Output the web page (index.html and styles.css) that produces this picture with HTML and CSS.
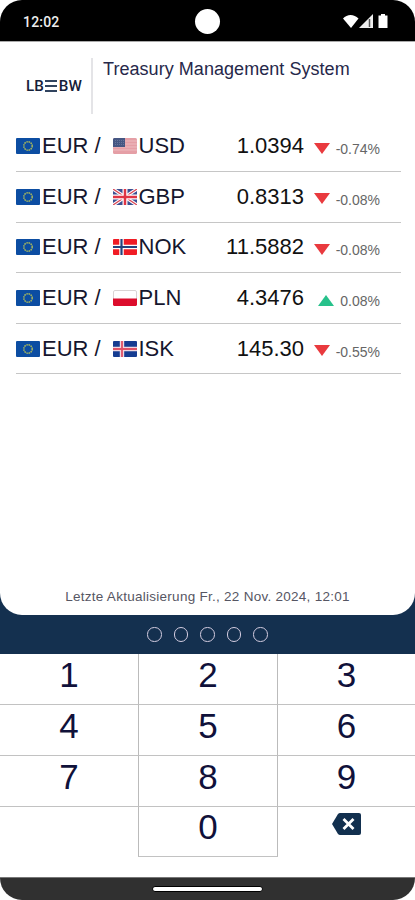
FILE: index.html
```html
<!DOCTYPE html>
<html lang="de">
<head>
<meta charset="utf-8">
<title>Treasury Management System</title>
<link rel="stylesheet" href="styles.css">
</head>
<body>
<svg class="defs" width="0" height="0" aria-hidden="true">
  <symbol id="eu" viewBox="0 0 24 16"><rect width="24" height="16" rx="1" fill="#0c4da2"/><circle cx="12" cy="8" r="4.2" fill="none" stroke="#a9b85c" stroke-width="1.5" stroke-dasharray="1.5 .7"/></symbol>
  <symbol id="us" viewBox="0 0 24 16"><rect width="24" height="16" rx="1.5" fill="#e59fa6"/><path d="M0 3h24M0 6h24M0 9h24M0 12h24" stroke="#edbcc0"/><path d="M1 0h11v9H0V1z" fill="#465783"/><path d="M2 2.5h9M2 4.5h9M2 6.5h9" stroke="#7583a5" stroke-width=".7" stroke-dasharray="1 1"/></symbol>
  <symbol id="gb" viewBox="0 0 24 16"><rect width="24" height="16" rx="1.5" fill="#3c4f91"/><path d="M0 0l24 16M24 0L0 16" stroke="#fff" stroke-width="3.4"/><path d="M0 0l24 16M24 0L0 16" stroke="#dc4856" stroke-width="1.3"/><path d="M12 0v16M0 8h24" stroke="#fff" stroke-width="5"/><path d="M12 0v16M0 8h24" stroke="#df3444" stroke-width="2.5"/></symbol>
  <symbol id="no" viewBox="0 0 24 16"><rect width="24" height="16" rx="1" fill="#f01c25"/><path d="M8.5 0v16M0 8h24" stroke="#fff" stroke-width="4.5"/><path d="M8.5 0v16M0 8h24" stroke="#24427d" stroke-width="2.2"/></symbol>
  <symbol id="pl" viewBox="0 0 24 16"><rect x=".5" y=".5" width="23" height="15" rx="1.5" fill="#fff" stroke="#d9d4d4"/><path d="M0 8.5h24V15l-1 1H1l-1-1z" fill="#dc0d2c"/></symbol>
  <symbol id="is" viewBox="0 0 24 16"><rect width="24" height="16" rx="1" fill="#153c91"/><path d="M9 0v16M0 8h24" stroke="#f0d7e0" stroke-width="4.4"/><path d="M9 0v16M0 8h24" stroke="#df5267" stroke-width="1.8"/></symbol>
</svg>
<div class="phone">
  <header class="status">
    <span class="time">12:02</span>
    <span class="camera"></span>
    <svg class="signals" width="46" height="15" viewBox="0 0 46 15">
      <path d="M0 4.500C4-.2 11-.2 15.500 4.500L8 14z" fill="#fff"/>
      <path d="M30 0v14H16z" fill="#eee"/><path d="M26.500 5v8" stroke="#555" stroke-width="1.500"/>
      <path d="M38 1.500V0h4v1.500h2.500V14h-9V1.500z" fill="#fff"/>
    </svg>
  </header>
  <main class="rates">
    <div class="brand">
      <div class="logo"><span>LB</span><i class="bars"></i><span>BW</span></div>
      <h1>Treasury Management System</h1>
    </div>
    <div class="list">
      <div class="row"><svg class="flag"><use href="#eu"/></svg><span class="base">EUR /</span><svg class="flag"><use href="#us"/></svg><span class="quote">USD</span><span class="value">1.0394</span><span class="change"><i class="down"></i>-0.74%</span></div>
      <div class="row"><svg class="flag"><use href="#eu"/></svg><span class="base">EUR /</span><svg class="flag"><use href="#gb"/></svg><span class="quote">GBP</span><span class="value">0.8313</span><span class="change"><i class="down"></i>-0.08%</span></div>
      <div class="row"><svg class="flag"><use href="#eu"/></svg><span class="base">EUR /</span><svg class="flag"><use href="#no"/></svg><span class="quote">NOK</span><span class="value">11.5882</span><span class="change"><i class="down"></i>-0.08%</span></div>
      <div class="row"><svg class="flag"><use href="#eu"/></svg><span class="base">EUR /</span><svg class="flag"><use href="#pl"/></svg><span class="quote">PLN</span><span class="value">4.3476</span><span class="change"><i class="up"></i>0.08%</span></div>
      <div class="row"><svg class="flag"><use href="#eu"/></svg><span class="base">EUR /</span><svg class="flag"><use href="#is"/></svg><span class="quote">ISK</span><span class="value">145.30</span><span class="change"><i class="down"></i>-0.55%</span></div>
    </div>
    <p class="updated">Letzte Aktualisierung Fr., 22 Nov. 2024, 12:01</p>
  </main>
  <div class="pin"><i></i><i></i><i></i><i></i><i></i></div>
  <div class="keypad">
    <span>1</span><span class="mid">2</span><span>3</span>
    <span>4</span><span class="mid">5</span><span>6</span>
    <span>7</span><span class="mid">8</span><span>9</span>
    <span class="last"></span><span class="mid zero">0</span><span class="last"><svg class="erase" width="29" height="22" viewBox="0 0 29 22"><path d="M8 0h19q2 0 2 2v18q0 2-2 2H8q-1 0-2-1L0 11 6 1q1-1 2-1z" fill="#12304f"/><path d="M11.500 6l10 10M21.500 6l-10 10" stroke="#fff" stroke-width="2.800"/></svg></span>
  </div>
  <footer class="navbar"><i></i></footer>
</div>
</body>
</html>
```
FILE: styles.css
```css
* { box-sizing: border-box; }
body { margin: 0; background: #fff; font-family: "Liberation Sans", Arial, sans-serif; }
.defs { display: block; position: absolute; }
.phone { width: 415px; height: 900px; display: flex; flex-direction: column; overflow: hidden; border-radius: 22px; background: #fff; }
.status { height: 41px; flex: none; background: #000; color: #eee; display: grid; grid-template-columns: 1fr 25px 1fr; align-items: center; padding: 2px 26px 0 23px; }
.time { font: 500 14px Roboto, sans-serif; letter-spacing: .2px; }
.camera { width: 25px; height: 25px; border-radius: 50%; background: #fff; margin-left: 1px; }
.signals { justify-self: end; }
.rates { position: relative; height: 574px; flex: none; display: flex; flex-direction: column; background: #fff; border-top: 1px solid #aaa; border-radius: 0 0 22px 22px; }
.brand { height: 79.5px; flex: none; display: flex; padding: 16px 0 0 26px; }
.logo { width: 67px; height: 56px; border-right: 2px solid #e4e4e7; display: flex; align-items: center; font: 500 15.2px Roboto, sans-serif; color: #152039; }
.bars { width: 12px; height: 12px; margin: 0 2px 0 1px; border-top: 2px solid #31445f; border-bottom: 2px solid #31445f; display: flex; align-items: center; }
.bars::before { content: ""; width: 100%; height: 2px; background: #31445f; }
h1 { margin: 0 0 0 10px; font-size: 18px; line-height: 22px; font-weight: 400; letter-spacing: .05px; color: #26284a; white-space: nowrap; }
.list { padding: 0 14px 0 16px; }
.row { height: 50.6px; border-bottom: 1.5px solid #c6c6c6; display: flex; align-items: center; font-size: 22px; color: #15162e; white-space: nowrap; }
.flag { width: 24px; height: 16px; flex: none; }
.base { width: 70px; padding-left: 2px; margin-right: 2.5px; }
.quote { padding-left: 2px; }
.value { width: 90px; margin-left: auto; text-align: right; color: #111; }
.change { width: 76px; margin-right: 21px; display: flex; align-items: center; justify-content: flex-end; gap: 5px; font-size: 14px; color: #666; padding-top: 6px; }
.down, .up { border: 8.500px solid transparent; border-bottom: 0; border-top: 11px solid #e93a3e; margin-top: -2px; margin-right: 1px; }
.up { border: 8.500px solid transparent; border-top: 0; border-bottom: 11px solid #27c18b; }
.updated { margin: auto 0 10px; text-align: center; font-size: 13.5px; line-height: 17px; letter-spacing: .27px; color: #565663; }
.pin { height: 61px; flex: none; margin-top: -22px; padding-top: 22px; background: #14304f; display: flex; align-items: center; justify-content: center; gap: 12px; }
.pin i { width: 14.5px; height: 14.5px; border: 1.8px solid #d3cce0; border-radius: 50%; }
.keypad { height: 203px; flex: none; display: grid; grid-template-columns: 138px 140px 137px; grid-template-rows: 51px 51px 51px 50px; }
.keypad span { display: flex; justify-content: center; font-size: 35px; line-height: 42px; color: #10113a; border-bottom: 1px solid #c2c2c2; }
.keypad .mid { border-left: 1px solid #bbb; border-right: 1px solid #bbb; }
.keypad .zero { line-height: 40px; }
.keypad .last { border-bottom: 0; }
.erase { margin-top: 6px; }
.navbar { height: 23px; margin-top: auto; background: #303030; border-top: 1px solid #777; display: flex; align-items: center; justify-content: center; }
.navbar i { width: 111px; height: 6px; border: 1px solid #000; border-radius: 3px; background: #fff; }
```
